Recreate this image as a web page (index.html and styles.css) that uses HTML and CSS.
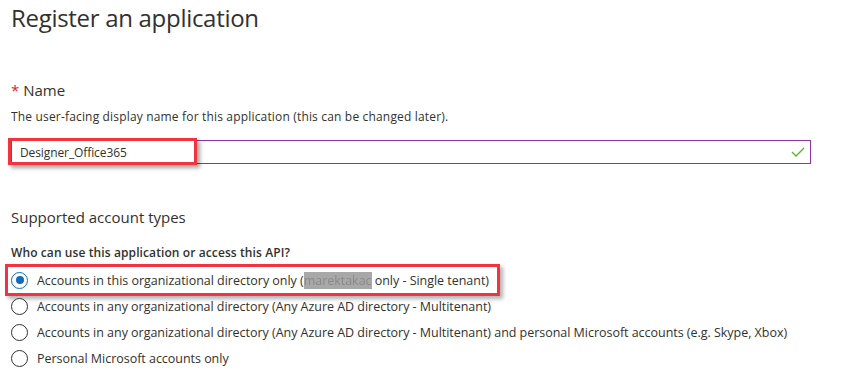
FILE: index.html
```html
<!DOCTYPE html>
<html lang="en">
<head>
  <meta charset="UTF-8">
  <title>Register an application</title>
  <link rel="stylesheet" href="styles.css">
</head>
<body>

  <h1 class="page-title">Register an application</h1>

  <!-- NAME -->
  <section class="section">
    <div class="section-title"><span class="required">*</span> Name</div>
    <div class="hint">The user-facing display name for this application (this can be changed later).</div>
    <div class="text-field">
      <span class="field-value">Designer_Office365</span>
      <svg class="check" width="14" height="10" viewBox="0 0 14 10">
        <path d="M1 5 L5 9 L13 1" fill="none" stroke="#5db12f" stroke-width="1.3"/>
      </svg>
      <span class="mark mark-name"></span>
    </div>
  </section>

  <!-- ACCOUNT TYPES -->
  <section class="section section-accounts">
    <div class="section-title">Supported account types</div>
    <div class="question">Who can use this application or access this API?</div>
    <div class="options">
      <label class="option option-marked">
        <span class="radio checked"></span>
        <span>Accounts in this organizational directory only (<span class="blur">marektakac</span> only - Single tenant)</span>
      </label>
      <label class="option">
        <span class="radio"></span>
        <span>Accounts in any organizational directory (Any Azure AD directory - Multitenant)</span>
      </label>
      <label class="option">
        <span class="radio"></span>
        <span>Accounts in any organizational directory (Any Azure AD directory - Multitenant) and personal Microsoft accounts (e.g. Skype, Xbox)</span>
      </label>
      <label class="option">
        <span class="radio"></span>
        <span>Personal Microsoft accounts only</span>
      </label>
    </div>
  </section>

</body>
</html>
```

FILE: styles.css
```css
body {
  margin: 0;
  padding: 0 0 0 11px;
  background: white;
  font-family: 'Open Sans', 'Noto Sans', sans-serif;
  color: #323130;
}

.page-title {
  margin: 0;
  padding-top: 2px;
  font-size: 24px;
  font-weight: 400;
  line-height: 32px;
  letter-spacing: -0.3px;
}

.section {
  margin-top: 45px;
}

.section-title {
  font-size: 15px;
  line-height: 22px;
}

.required {
  color: #e0202a;
}

.hint {
  margin-top: 7px;
  font-size: 12px;
  line-height: 18px;
  letter-spacing: 0.17px;
}

.text-field {
  position: relative;
  display: flex;
  align-items: center;
  justify-content: space-between;
  margin-top: 14px;
  width: 798px;
  height: 22px;
  border: 1px solid #8a35a6;
  box-sizing: content-box;
}

.field-value {
  padding-left: 8px;
  font-size: 12px;
  letter-spacing: -0.1px;
}

.check {
  margin-right: 5px;
}

.mark {
  position: absolute;
  border: 3px solid #f0353f;
  box-shadow: 3px 3px 4px rgba(0, 0, 0, 0.35);
}

.mark-name {
  left: -4px;
  top: -3px;
  width: 183px;
  height: 21px;
}

.section-accounts {
  margin-top: 42px;
}

.question {
  margin-top: 16px;
  font-size: 12px;
  font-weight: 600;
  line-height: 18px;
  letter-spacing: 0.1px;
}

.options {
  display: flex;
  flex-direction: column;
  gap: 8px;
  margin-top: 9px;
}

.option {
  display: flex;
  align-items: center;
  gap: 9px;
  height: 18px;
  font-size: 12.5px;
  letter-spacing: -0.03px;
  white-space: nowrap;
}

.option-marked {
  position: relative;
}

.option-marked::after {
  content: '';
  position: absolute;
  left: -6px;
  top: -7px;
  width: 489px;
  height: 26px;
  border: 3px solid #f0353f;
  box-shadow: 3px 3px 4px rgba(0, 0, 0, 0.3);
}

.radio {
  position: relative;
  width: 15px;
  height: 15px;
  border: 1px solid #323130;
  border-radius: 50%;
  flex-shrink: 0;
  background: white;
}

.radio.checked {
  border-color: #0f6cbd;
}

.radio.checked::after {
  content: '';
  position: absolute;
  left: 3.5px;
  top: 3.5px;
  width: 8px;
  height: 8px;
  border-radius: 50%;
  background: #0f6cbd;
}

.blur {
  color: #8a8a8a;
  background: #a8a8a8;
  filter: blur(0.6px);
}
```
